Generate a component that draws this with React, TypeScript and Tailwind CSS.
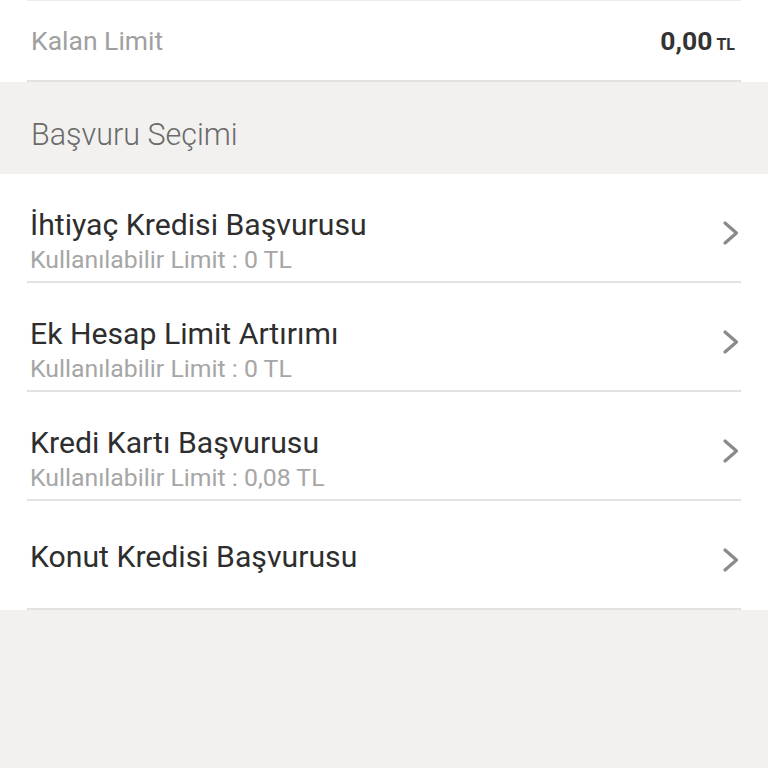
import React from "react";

const Chevron = () => (
  <svg width="18" height="26" viewBox="0 0 18 26" fill="none">
    <path d="M3 3 L14.5 13 L3 23" stroke="#8a8a8a" strokeWidth="3.2" strokeLinecap="round" strokeLinejoin="round" />
  </svg>
);

const items = [
  { title: "İhtiyaç Kredisi Başvurusu", sub: "Kullanılabilir Limit : 0 TL" },
  { title: "Ek Hesap Limit Artırımı", sub: "Kullanılabilir Limit : 0 TL" },
  { title: "Kredi Kartı Başvurusu", sub: "Kullanılabilir Limit : 0,08 TL" },
  { title: "Konut Kredisi Başvurusu", sub: "" },
];

export default function App() {
  return (
    <div className="w-[768px] h-[768px] bg-[#f2f1f0] overflow-hidden" style={{ fontFamily: "Roboto, 'Noto Sans', sans-serif" }}>
      <div className="bg-white px-[27px]">
        <div className="border-t border-[#ececec]" />
        <div className="h-[81px] flex items-center justify-between pl-[4px] pr-[6px] border-b-2 border-[#e2e2e2]">
          <span className="text-[26.5px] text-[#a0a0a0]">Kalan Limit</span>
          <span className="text-[#333] font-bold flex items-baseline">
            <span className="text-[26.5px]">0,00</span>
            <span className="text-[16px] ml-[4px]">TL</span>
          </span>
        </div>
      </div>
      <div className="h-[92px] pt-[35px] px-[31px]">
        <div className="text-[30.5px] leading-[35px] font-light text-[#6a6a6a]">Başvuru Seçimi</div>
      </div>
      <div className="bg-white px-[27px]">
        {items.map((it) => (
          <div key={it.title} className="h-[109px] flex items-start justify-between border-b-2 border-[#e2e2e2] pl-[3px] pr-[1px]">
            <div className={it.sub ? "flex flex-col pt-[34px]" : "flex flex-col pt-[39px]"}>
              <span className="text-[30.2px] text-[#2e2e2e] leading-[34px]">{it.title}</span>
              {it.sub && <span className="text-[24.8px] text-[#a6a6a6] leading-[35px]">{it.sub}</span>}
            </div>
            <div className="pt-[46px]">
              <Chevron />
            </div>
          </div>
        ))}
      </div>
    </div>
  );
}
